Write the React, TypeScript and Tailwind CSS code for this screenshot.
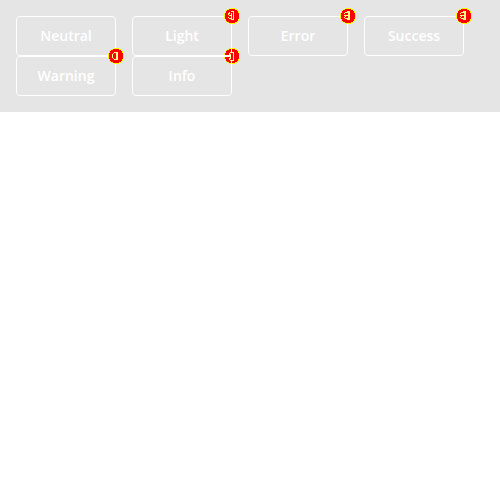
import React from "react";

type Mark = "five" | "three" | "zero" | "one";

const marks: Record<Mark, string> = {
  five: "M9 3h1v9h-1zM7 3h2v1h-2zM7 11h2v1h-2zM5 4h1v2h-1zM4 5h1v2h-1zM5 7h3v1h-3zM7 5h1v2h-1zM7 8h1v2h-1zM4 9h1v1h-1zM5 10h3v1h-3z",
  three: "M8 3h2v9h-2zM7 3h1v1h-1zM7 11h1v1h-1zM5 4h3v1h-3zM4 5h1v1h-1zM4 7h4v1h-4zM5 8h1v1h-1zM4 9h1v1h-1zM5 10h3v1h-3z",
  zero: "M8 4h2v8h-2zM6 4h2v1h-2zM5 5h1v1h-1zM4 6h1v4h-1zM5 10h1v1h-1zM6 11h2v1h-2z",
  one: "M9 4h1v9h-1zM6 4h3v1h-3zM6 12h3v1h-3zM5 5h1v2h-1zM5 10h1v2h-1zM6 6h1v5h-1z",
};

const items: { label: string; badge?: Mark }[] = [
  { label: "Neutral" },
  { label: "Light", badge: "five" },
  { label: "Error", badge: "three" },
  { label: "Success", badge: "three" },
  { label: "Warning", badge: "zero" },
  { label: "Info", badge: "one" },
];

function Badge({ mark }: { mark: Mark }) {
  return (
    <svg className="absolute -top-[9px] -right-[9px] size-4" viewBox="0 0 16 16" shapeRendering="crispEdges">
      <path fill="#ff0" d="M5 0h6v1h2v1h1v1h1v2h1v6h-1v2h-1v1h-1v1h-2v1h-6v-1h-2v-1h-1v-1h-1v-2h-1v-6h1v-2h1v-1h1v-1h2z" />
      <path fill="#f00" d="M5 1h6v1h2v1h1v2h1v6h-1v2h-1v1h-2v1h-6v-1h-2v-1h-1v-2h-1v-6h1v-2h1v-1h2z" />
      <path d={marks[mark]} fill="#ffff8c" />
      {mark === "one" && <path d="M0 7h6v2h-6zM7 0h1v4h-1zM7 13h1v3h-1z" fill="#fff" />}
    </svg>
  );
}

export default function App() {
  return (
    <div className="flex h-28 flex-wrap content-start gap-x-4 bg-[#e5e5e5] p-4 font-['Open_Sans',sans-serif]">
      {items.map(({ label, badge }) => (
        <div
          key={label}
          className="relative flex h-10 w-[100px] items-center justify-center rounded border border-white text-sm font-semibold text-white"
        >
          {label}
          {badge && <Badge mark={badge} />}
        </div>
      ))}
    </div>
  );
}
